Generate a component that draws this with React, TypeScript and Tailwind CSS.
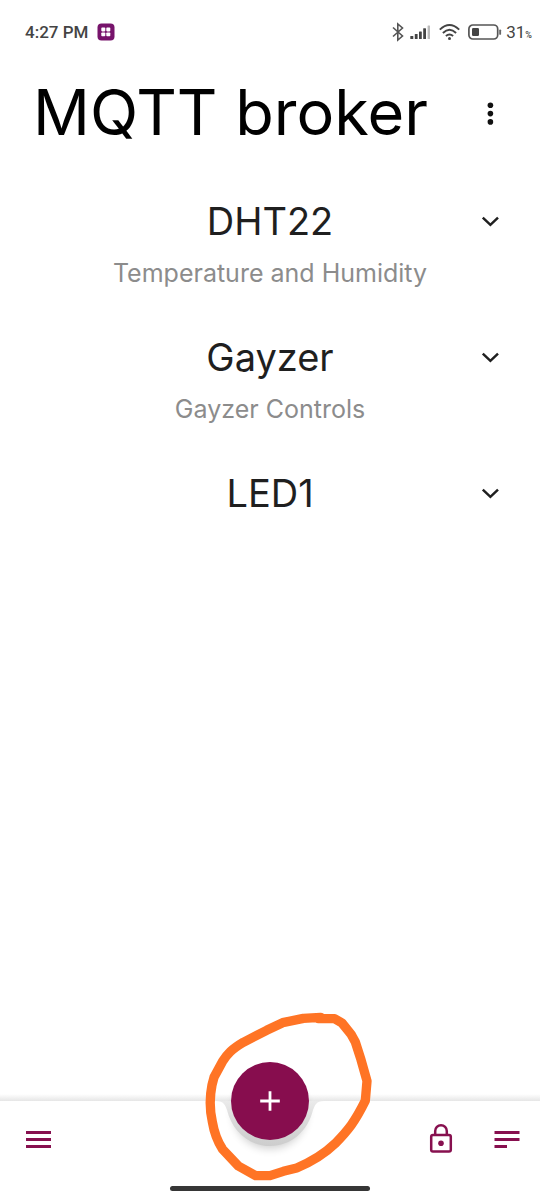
type Group = { name: string; detail?: string };

const groups: Group[] = [
  { name: "DHT22", detail: "Temperature and Humidity" },
  { name: "Gayzer", detail: "Gayzer Controls" },
  { name: "LED1" },
];

function StatusBar() {
  return (
    <div className="flex h-16 items-center pl-[25px] pr-2 font-[Roboto,sans-serif] text-[#444]">
      <span className="text-[17px] leading-5 font-medium">4:27 PM</span>
      <svg className="ml-[9px] h-[18px] w-[18px]" viewBox="0 0 18 18" aria-hidden="true">
        <rect x="0.5" y="0.5" width="17" height="17" rx="4" fill="#77136b" />
        <g fill="#fff">
          <rect x="4.3" y="4.6" width="4" height="3.8" rx="0.8" />
          <rect x="9.3" y="4.6" width="4" height="3.8" rx="0.8" />
          <rect x="4.3" y="9.4" width="4" height="3.8" rx="0.8" />
          <rect x="9.3" y="9.4" width="4" height="3.8" rx="0.8" />
        </g>
      </svg>
      <div className="ml-auto flex items-center">
        <svg className="mr-1.5 h-5 w-3" viewBox="0 0 12 20" fill="none" stroke="#555" strokeWidth="1.6" aria-hidden="true">
          <path d="M1 5.5 L10.5 14 L5.8 18 V2 L10.5 6 L1 14.5" />
        </svg>
        <svg className="mr-2 h-5 w-[21px]" viewBox="0 0 21 20" aria-hidden="true">
          <g fill="#444">
            <rect x="0.3" y="14" width="3" height="3" rx="0.5" />
            <rect x="4.8" y="12" width="2.8" height="5" rx="0.5" />
            <rect x="9" y="9.6" width="2.8" height="7.4" rx="0.5" />
            <rect x="13.2" y="6.2" width="2.8" height="10.8" rx="0.5" />
          </g>
          <rect x="17.6" y="3.4" width="2.4" height="13.6" rx="0.5" fill="#bbb" />
        </svg>
        <svg className="mr-2 h-5 w-[21px]" viewBox="0 0 21 20" fill="none" stroke="#444" strokeWidth="1.9" aria-hidden="true">
          <path d="M0.8 7.6 Q10.5 -1.6 20.2 7.6" />
          <path d="M3.9 11 Q10.5 4.6 17.1 11" />
          <path d="M6.9 14 Q10.5 10.8 14.1 14" />
          <circle cx="10.5" cy="16.4" r="1.5" fill="#444" stroke="none" />
        </svg>
        <svg className="mr-1 h-5 w-[34px]" viewBox="0 0 34 20" aria-hidden="true">
          <rect x="0.9" y="3" width="28.8" height="14" rx="4" fill="none" stroke="#555" strokeWidth="1.7" />
          <rect x="4" y="6" width="7" height="8" rx="1.2" fill="#444" />
          <rect x="31.2" y="7.4" width="1.9" height="5.4" rx="0.9" fill="#666" />
        </svg>
        <span className="flex items-baseline">
          <span className="text-[17px] leading-5">31</span>
          <span className="text-[9px] font-medium">%</span>
        </span>
      </div>
    </div>
  );
}

function GroupRow({ name, detail }: Group) {
  return (
    <li>
      <button
        type="button"
        aria-expanded="false"
        className="grid w-full grid-cols-[100px_1fr_100px] items-center text-center"
      >
        <span className="col-start-2 text-[38px] leading-[52px] text-[#1f1f1f]">{name}</span>
        <svg className="h-6 w-6 justify-self-center" viewBox="0 0 24 24" fill="none" stroke="#1f1f1f" strokeWidth="2.5" aria-hidden="true">
          <path d="M4.8 8.7 L12.4 15.8 L20 8.7" />
        </svg>
        {detail && (
          <span className="col-span-3 mt-2 text-[25px] leading-9 text-[#8c8c8c]">{detail}</span>
        )}
      </button>
    </li>
  );
}

function BottomBar() {
  return (
    <nav className="relative">
      <div className="flex items-start">
        <div className="mt-[40px] h-[7px] flex-1 bg-linear-to-b from-white to-[#e6e6e6]" />
        <svg className="h-[104px] w-[112px]" viewBox="0 0 112 104" aria-hidden="true">
          <defs>
            <linearGradient id="edge" x1="0" x2="0" y1="40" y2="47" gradientUnits="userSpaceOnUse">
              <stop offset="0" stopColor="#fff" />
              <stop offset="1" stopColor="#e6e6e6" />
            </linearGradient>
            <linearGradient id="rim" x1="0" x2="0" y1="42" y2="91" gradientUnits="userSpaceOnUse">
              <stop offset="0" stopColor="#efefef" />
              <stop offset="0.5" stopColor="#dadada" />
              <stop offset="1" stopColor="#cdcdcd" />
            </linearGradient>
            <filter id="soft" x="-30%" y="-30%" width="160%" height="160%">
              <feGaussianBlur stdDeviation="4" />
            </filter>
          </defs>
          <path d="M0 40 H112 V47 H0 Z" fill="url(#edge)" />
          <circle cx="56" cy="58" r="37" fill="#000" opacity="0.18" filter="url(#soft)" />
          <path d="M2 47 C10 47 11 51 13 56 C18 77 35 92 56 92 C77 92 94 77 99 56 C101 51 102 47 110 47 Z" fill="url(#rim)" />
          <path d="M17 46 A39 39 0 0 1 95 46 Z" fill="#fff" />
        </svg>
        <div className="mt-[40px] h-[7px] flex-1 bg-linear-to-b from-white to-[#e6e6e6]" />
      </div>
      <div className="absolute inset-x-0 top-[65px] flex items-center pl-[18px] pr-[13px]">
        <button type="button" aria-label="Menu" className="flex h-10 w-10 items-center justify-center">
          <svg className="h-10 w-10" viewBox="0 0 40 40" stroke="#87104f" strokeWidth="2.8" aria-hidden="true">
            <path d="M8 13.5 H33 M8 20.5 H33 M8 27.5 H33" />
          </svg>
        </button>
        <button type="button" aria-label="Lock" className="ml-auto mr-[26px] flex h-10 w-10 items-center justify-center">
          <svg className="h-10 w-10" viewBox="0 0 40 40" fill="none" stroke="#87104f" strokeWidth="2.5" aria-hidden="true">
            <rect x="10.2" y="16" width="19.6" height="16.6" rx="1.8" />
            <path d="M14.2 15.8 V12 A5.8 5.8 0 0 1 25.8 12 V15.8" />
            <circle cx="20" cy="24.3" r="2.8" fill="#87104f" stroke="none" />
          </svg>
        </button>
        <button type="button" aria-label="Logs" className="flex h-10 w-10 items-center justify-center">
          <svg className="h-10 w-10" viewBox="0 0 40 40" stroke="#87104f" strokeWidth="2.8" aria-hidden="true">
            <path d="M7.5 13.5 H32.5 M7.5 20.5 H32.5 M7.5 27.5 H20" />
          </svg>
        </button>
      </div>
      <button
        type="button"
        aria-label="Add"
        className="absolute top-2 left-1/2 flex h-[78px] w-[78px] -translate-x-1/2 items-center justify-center rounded-full bg-[#870d4e]"
      >
        <svg className="h-6 w-6" viewBox="0 0 24 24" stroke="#fff" strokeWidth="2.8" aria-hidden="true">
          <path d="M12 2.2 V21.8 M2.2 12 H21.8" />
        </svg>
      </button>
      <svg
        className="pointer-events-none absolute -top-[54px] left-1/2 ml-[-80px] h-[200px] w-[200px]"
        viewBox="0 0 600 600"
        fill="none"
        stroke="#ff7425"
        strokeWidth="28"
        strokeLinecap="round"
        strokeLinejoin="round"
        aria-hidden="true"
      >
        <path d="M392 52 L340 55 L278 68 L230 91 L160 127 C125 148 112 162 98 184 L72 232 L66 255 C59 290 59 330 67 365 C72 395 81 422 98 448 L145 498 L197 527 L240 527 L280 514 L320 504 C370 483 405 460 435 431 C475 390 495 365 526 302 L531 243 L513 179 L496 126 L484 104 L456 69 L434 56 L385 56" />
      </svg>
    </nav>
  );
}

export default function App() {
  return (
    <div className="flex min-h-screen flex-col bg-white font-[Inter,sans-serif]">
      <StatusBar />
      <header className="flex items-center pl-[33px] pr-[30px] pt-2">
        <h1 className="text-[63px] leading-[80px] whitespace-nowrap text-black">MQTT broker</h1>
        <button type="button" aria-label="More options" className="ml-auto flex h-10 w-10 items-center justify-center">
          <svg className="h-10 w-10" viewBox="0 0 40 40" fill="#111" aria-hidden="true">
            <circle cx="20.4" cy="13.3" r="2.8" />
            <circle cx="20.4" cy="21.6" r="2.8" />
            <circle cx="20.4" cy="29.9" r="2.8" />
          </svg>
        </button>
      </header>
      <main className="flex-1 pt-[43px]">
        <ul className="flex flex-col gap-10">
          {groups.map((group) => (
            <GroupRow key={group.name} {...group} />
          ))}
        </ul>
      </main>
      <BottomBar />
      <div className="flex justify-center pt-7 pb-[9px]">
        <div className="h-[5px] w-[200px] rounded-full bg-[#363636]" />
      </div>
    </div>
  );
}
